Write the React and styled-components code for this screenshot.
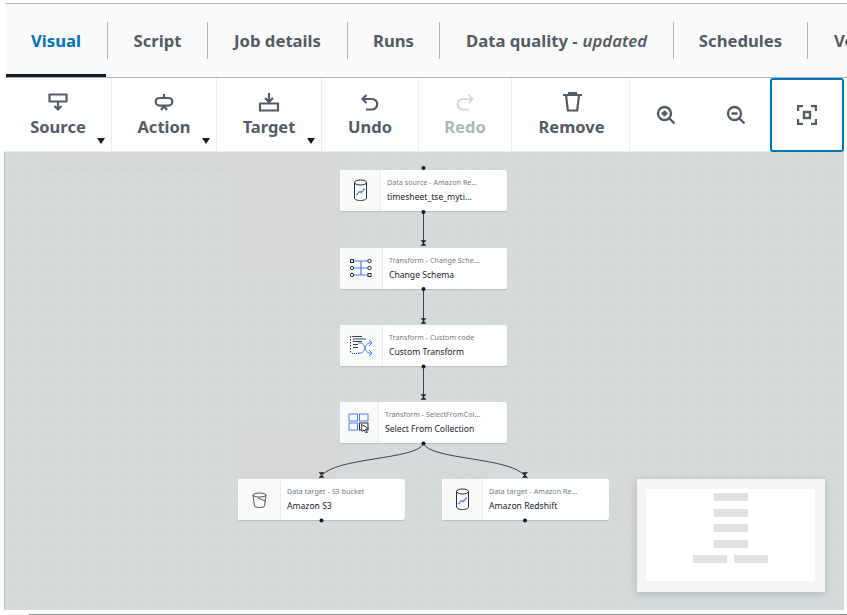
import React from "react";
import styled, { createGlobalStyle } from "styled-components";

const Global = createGlobalStyle`
  html, body { margin: 0; padding: 0; background: #fff; }
  body { width: 847px; height: 615px; overflow: hidden; font-family: "Noto Sans", "Open Sans", sans-serif; }
  * { box-sizing: border-box; }
`;

const Page = styled.div`
  width: 847px;
  height: 615px;
  padding: 3px 0 0 5px;
  display: flex;
  flex-direction: column;
  overflow: hidden;
`;

const Tabs = styled.div`
  height: 75px;
  flex: none;
  display: flex;
  align-items: center;
  background: #fafafa;
  border-top: 1px solid #aab7b8;
  border-bottom: 1px solid #aab7b8;
  overflow: hidden;
  position: relative;
`;

const Tab = styled.div`
  flex: none;
  width: ${(p) => p.$w}px;
  height: 37px;
  display: flex;
  align-items: center;
  justify-content: ${(p) => (p.$last ? "flex-start" : "center")};
  padding-left: ${(p) => (p.$last ? "26px" : "0")};
  font-size: 16.7px;
  font-weight: 700;
  white-space: nowrap;
  color: ${(p) => (p.$active ? "#0073bb" : "#545b64")};
  border-right: ${(p) => (p.$last ? "0" : "1px solid #aab7b8")};
  em { font-style: italic; font-weight: 600; margin-left: 5px; }
`;

const ActiveLine = styled.div`
  position: absolute;
  left: 1px;
  bottom: 0;
  width: 100px;
  height: 3px;
  background: #16191f;
`;

const Toolbar = styled.div`
  width: 839px;
  height: 74px;
  flex: none;
  display: flex;
  background: #fff;
  border-bottom: 1px solid #eaeded;
`;

const ToolButton = styled.div`
  position: relative;
  flex: none;
  width: ${(p) => p.$w}px;
  display: flex;
  flex-direction: column;
  align-items: center;
  padding-top: 13px;
  padding-left: ${(p) => p.$nudge || 0}px;
  border-right: 1px solid #eaeded;
  color: ${(p) => (p.$off ? "#aab7b8" : "#545b64")};
  font-size: 16.5px;
  font-weight: 700;
  line-height: 22px;
  svg { display: block; margin-bottom: 3px; color: ${(p) => (p.$off ? "#d5dbdb" : "#545b64")}; }
`;

const Caret = styled.span`
  position: absolute;
  right: 6px;
  bottom: 7px;
  width: 0;
  height: 0;
  border-left: 4px solid transparent;
  border-right: 4px solid transparent;
  border-top: 6px solid #16191f;
`;

const IconButton = styled.div`
  flex: none;
  width: ${(p) => p.$w}px;
  height: 74px;
  display: flex;
  align-items: center;
  justify-content: center;
  color: #545b64;
  border: ${(p) => (p.$focus ? "2px solid #0073bb" : "0")};
  border-radius: ${(p) => (p.$focus ? "3px" : "0")};
`;

const Canvas = styled.div`
  position: relative;
  width: 839px;
  height: 458px;
  flex: none;
  background-color: #d5dbdb;
  background-image: radial-gradient(circle, #cad0d0 0.6px, transparent 0.9px),
    linear-gradient(#d8d8d8, #d8d8d8),
    linear-gradient(#d8d8d8, #d8d8d8),
    linear-gradient(#d8d8d8, #d8d8d8),
    linear-gradient(#d8d8d8, #d8d8d8);
  background-size: 14px 14px, 302px 21px, 105px 100px, 105px 60px, 17px 51px;
  background-position: 0.5px -4px, 33px 0, 230px 21px, 230px 270px, 615px 327px;
  background-repeat: repeat, no-repeat, no-repeat, no-repeat, no-repeat;
  box-shadow: -1px 0 0 #bcc3c3;
  overflow: hidden;
`;

const Wires = styled.svg`
  position: absolute;
  inset: 0;
`;

const Node = styled.div`
  position: absolute;
  left: ${(p) => p.$x}px;
  top: ${(p) => p.$y}px;
  width: 167px;
  height: 41px;
  display: flex;
  background: #fff;
  border-radius: 2px;
  box-shadow: 0 1px 1px rgba(0, 28, 36, 0.15);
`;

const NodeIcon = styled.div`
  flex: none;
  width: ${(p) => p.$w}px;
  display: flex;
  align-items: center;
  justify-content: center;
  background: #fafafa;
  border-right: 1px solid #eaeded;
`;

const NodeBody = styled.div`
  flex: 1;
  min-width: 0;
  padding: 8px 0 0 6px;
`;

const NodeKind = styled.div`
  font-size: 7px;
  line-height: 9px;
  letter-spacing: 0.1px;
  color: #6f787f;
  white-space: nowrap;
`;

const NodeName = styled.div`
  font-size: 8.6px;
  line-height: 12px;
  margin-top: 4px;
  color: #16191f;
  white-space: nowrap;
`;

const MiniMap = styled.div`
  position: absolute;
  left: 632px;
  top: 327px;
  width: 188px;
  height: 113px;
  padding: 10px 10px 11px 9px;
  background: #f5f5f5;
  box-shadow: 0 2px 8px rgba(0, 28, 36, 0.18);
`;

const MiniInner = styled.div`
  height: 100%;
  background: #fff;
  padding-top: 4px;
  display: flex;
  flex-direction: column;
  align-items: center;
  gap: 7.5px;
`;

const MiniRow = styled.div`
  display: flex;
  gap: 7px;
`;

const MiniBar = styled.div`
  width: 34px;
  height: 8px;
  background: #e1e1e1;
`;

const BottomRule = styled.div`
  flex: none;
  height: 1px;
  margin: 4px 0 0 24px;
  background: #8d9494;
`;

const I = (p) => <svg width="22" height="22" viewBox="0 0 22 22" fill="none" stroke="currentColor" strokeWidth="2.200" {...p} />;

const Db = () => (
  <svg width="17" height="23" viewBox="0 0 17 23" fill="none">
    <ellipse cx="8.500" cy="3.500" rx="6" ry="2.500" stroke="#232f3e" />
    <path d="M2.500 3.500v15.500c0 1.500 2.700 2.500 6 2.500s6-1 6-2.500V3.500" stroke="#232f3e" />
    <path d="M4.500 16l3-3.500 2 1 3-4" stroke="#4d7cf0" strokeWidth="1.500" strokeDasharray="2 0.500" />
  </svg>
);

const Schema = () => (
  <svg width="24" height="20" viewBox="0 0 24 20" fill="none" stroke="#232f3e">
    <path d="M4 3h16M4 10h16M4 17h16M12 3v14" stroke="#4d7cf0" strokeWidth="1.200" />
    <rect x="1.500" y="1.500" width="3" height="3" fill="#fff" />
    <circle cx="3" cy="10" r="1.700" fill="#fff" />
    <circle cx="3" cy="17" r="1.700" fill="#fff" />
    <circle cx="20.500" cy="3" r="1.700" fill="#fff" />
    <circle cx="20.500" cy="10" r="1.700" fill="#fff" />
    <rect x="19" y="15.500" width="3" height="3" fill="#fff" />
  </svg>
);

const Custom = () => (
  <svg width="24" height="22" viewBox="0 0 24 22" fill="none">
    <path d="M3 1.500h10M4 4h13M4 6.500h9M4 9.500h5M4 12.500h5" stroke="#232f3e" strokeWidth="0.900" />
    <path d="M1.500 1v18" stroke="#232f3e" strokeDasharray="1.500 1.500" />
    <path d="M3 18.500h8" stroke="#232f3e" strokeDasharray="1 1" />
    <path d="M9 8h3c4 0 4 10 8 10h3M9 18h3c4 0 4-10 8-10h3M20 5l3 3-3 3M20 15l3 3-3 3" stroke="#4d7cf0" />
  </svg>
);

const Select = () => (
  <svg width="22" height="20" viewBox="0 0 22 20" fill="none">
    <rect x="1" y="1" width="8.500" height="7" stroke="#4d7cf0" />
    <rect x="11.500" y="1" width="8.500" height="7" stroke="#4d7cf0" />
    <rect x="1" y="10" width="8.500" height="7" stroke="#4d7cf0" />
    <rect x="11.500" y="10" width="8.500" height="7" stroke="#232f3e" />
    <path d="M13.500 11.500l7 4-3 1 2 3-1.500.5-2-3-2 1.500z" fill="#fff" stroke="#232f3e" strokeWidth="0.900" />
  </svg>
);

const Bucket = () => (
  <svg width="15" height="16" viewBox="0 0 15 16" fill="none" stroke="#232f3e" strokeWidth="0.800">
    <ellipse cx="7.500" cy="3" rx="6.500" ry="2" />
    <path d="M1 3l1.500 11c.2 1 2.500 1.500 5 1.500s4.800-.5 5-1.500L14 3M6 6l7.500 3" />
  </svg>
);

const nodes = [
  { x: 335, y: 18, w: 41, kind: "Data source - Amazon Re...", name: "timesheet_tse_myti...", icon: <Db /> },
  { x: 335, y: 95.5, w: 43, kind: "Transform - Change Sche...", name: "Change Schema", icon: <Schema /> },
  { x: 335, y: 173, w: 43, kind: "Transform - Custom code", name: "Custom Transform", icon: <Custom /> },
  { x: 335, y: 250, w: 39, kind: "Transform - SelectFromCol...", name: "Select From Collection", icon: <Select /> },
  { x: 233, y: 327, w: 43, kind: "Data target - S3 bucket", name: "Amazon S3", icon: <Bucket /> },
  { x: 437, y: 327, w: 41, kind: "Data target - Amazon Re...", name: "Amazon Redshift", icon: <Db /> },
];

const dots = [[418.5, 16], [418.5, 60], [418.5, 137], [418.5, 214.5], [418.5, 291.5], [316.5, 368.5], [520, 368.5]];
const ends = [[418.5, 91], [418.5, 169], [418.5, 245], [316.5, 323], [520, 323]];

export default function App() {
  return (
    <Page>
      <Global />
      <Tabs>
        <Tab $w={103} $active>Visual</Tab>
        <Tab $w={100}>Script</Tab>
        <Tab $w={140}>Job details</Tab>
        <Tab $w={92}>Runs</Tab>
        <Tab $w={234}>Data quality - <em>updated</em></Tab>
        <Tab $w={134}>Schedules</Tab>
        <Tab $w={40} $last>Version Control</Tab>
        <ActiveLine />
      </Tabs>
      <Toolbar>
        <ToolButton $w={107}>
          <I><path d="M2.500 3.500h17v7h-17zM11 10.500v8M7.500 15l3.500 3.500 3.500-3.500" /></I>
          Source<Caret />
        </ToolButton>
        <ToolButton $w={105}>
          <I><path d="M6.500 7h9a3.800 3.800 0 0 1 0 7.600h-9a3.800 3.800 0 0 1 0-7.600zM11 3v4M8 19l3-4 3 4" /></I>
          Action<Caret />
        </ToolButton>
        <ToolButton $w={105}>
          <I><path d="M2 12.500h18v7H2zM11 2v9.500M7 7l4 4 4-4" /></I>
          Target<Caret />
        </ToolButton>
        <ToolButton $w={97}>
          <I><path d="M7.500 4l-4 4 4 4M4 8h9a5 5 0 0 1 0 10.500H7" /></I>
          Undo
        </ToolButton>
        <ToolButton $w={93} $off>
          <I><path d="M14.500 4l4 4-4 4M18 8H9a5 5 0 0 0 0 10.500h6" /></I>
          Redo
        </ToolButton>
        <ToolButton $w={118} $nudge={2}>
          <I><path d="M2 4h19M5 4l1.800 15.500h9.400L18 4M8 4V2h7v2" /></I>
          Remove
        </ToolButton>
        <IconButton $w={71}>
          <svg width="20" height="20" viewBox="0 0 20 20" fill="none" stroke="currentColor" strokeWidth="2.400"><circle cx="8.500" cy="8.500" r="6.500" /><path d="M13 13l5.500 5.500M5.500 8.500h6M8.500 5.500v6" /></svg>
        </IconButton>
        <IconButton $w={69}>
          <svg width="20" height="20" viewBox="0 0 20 20" fill="none" stroke="currentColor" strokeWidth="2.400"><circle cx="8.500" cy="8.500" r="6.500" /><path d="M13 13l5.500 5.500M5.500 8.500h6" /></svg>
        </IconButton>
        <IconButton $w={74} $focus>
          <svg width="20" height="20" viewBox="0 0 20 20" fill="none" stroke="currentColor" strokeWidth="2.400"><path d="M1 6V1h5M14 1h5v5M19 14v5h-5M6 19H1v-5" /><rect x="7" y="7" width="6" height="6" /></svg>
        </IconButton>
      </Toolbar>
      <Canvas>
        {nodes.map((n) => (
          <Node key={n.name} $x={n.x} $y={n.y}>
            <NodeIcon $w={n.w}>{n.icon}</NodeIcon>
            <NodeBody>
              <NodeKind>{n.kind}</NodeKind>
              <NodeName>{n.name}</NodeName>
            </NodeBody>
          </Node>
        ))}
        <Wires width="839" height="458" viewBox="0 0 839 458" fill="none" stroke="#2b333d" strokeWidth="0.900">
          <path d="M418.500 60V92M418.500 137V170M418.500 214V246" />
          <path d="M418.500 291.500C412 308 330 305 316.500 324M418.500 291.500C425 308 506 305 520 324" />
          {dots.map(([x, y]) => <circle key={x + "-" + y} cx={x} cy={y} r="2" fill="#16191f" stroke="none" />)}
          {ends.map(([x, y]) => <path key={x + "-" + y} d={`M${x - 2.500} ${y - 2.500}h5l-5 5h5z`} fill="#16191f" strokeWidth="0.600" />)}
        </Wires>
        <MiniMap>
          <MiniInner>
            <MiniBar /><MiniBar /><MiniBar /><MiniBar />
            <MiniRow><MiniBar /><MiniBar /></MiniRow>
          </MiniInner>
        </MiniMap>
      </Canvas>
      <BottomRule />
    </Page>
  );
}
